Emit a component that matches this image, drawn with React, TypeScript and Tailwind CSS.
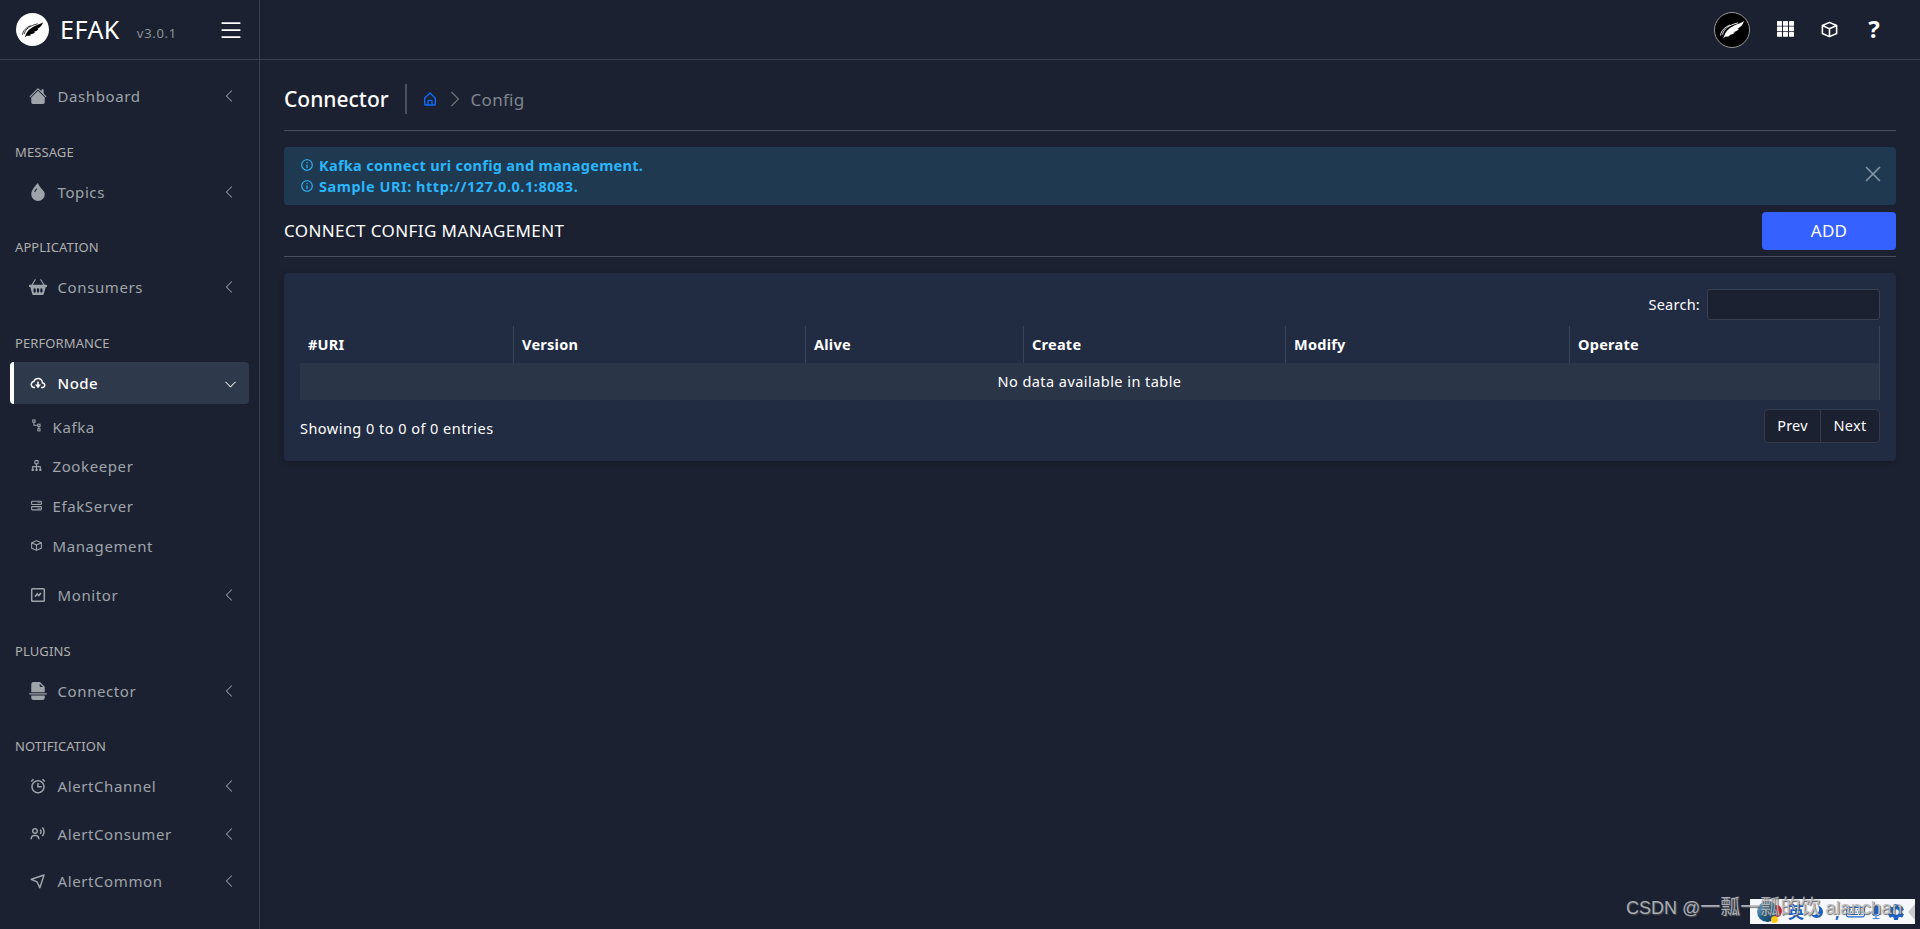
import type { ReactNode } from "react"
import type { IconType } from "react-icons"
import {
  BiAlarm,
  BiCloudDownload,
  BiCube,
  BiHomeAlt,
  BiInfoCircle,
  BiNavigation,
  BiServer,
  BiSitemap,
  BiUserVoice,
} from "react-icons/bi"
import {
  BsBasket2Fill,
  BsChevronDown,
  BsChevronLeft,
  BsChevronRight,
  BsDropletFill,
  BsFileEarmarkBreakFill,
  BsHouseFill,
  BsKeyboard,
  BsList,
  BsMicFill,
  BsMoonFill,
} from "react-icons/bs"
import { IoSettingsSharp } from "react-icons/io5"

type IconProps = { className?: string }

function FeatherMark({ className }: IconProps) {
  return (
    <svg viewBox="0 0 24 18" className={className} fill="currentColor">
      <path d="M24 0C22.500 1.600 17 3 12.500 5.500 9 7.600 6.500 9.800 5.200 12.500L3 17.500l2.500-2c1.500.3 3.500.1 5-.9l-1.700-.4c2.200-.2 4.700-1.100 6.200-2.600l-2-.3c2.500-.5 4.800-1.700 6-3.500l-1.700-.1C20 6.500 23 4 24 0z" />
      <path d="M18 1.900C9 4 3.500 8 2.600 13.500" fill="none" stroke="currentColor" strokeWidth=".9" />
      <path d="M10 4C5 6 1.200 9.500.5 14.500" fill="none" stroke="currentColor" strokeWidth=".9" />
    </svg>
  )
}

// rising line in a box
function MonitorIcon({ className }: IconProps) {
  return (
    <svg viewBox="0 0 18 18" className={className} fill="none" stroke="currentColor" strokeWidth="1.500">
      <rect x="2.700" y="2.700" width="12.600" height="12.600" rx=".8" />
      <path d="M6 10.600L8.300 8l1.600 1.600L12 7" strokeWidth="1.600" />
    </svg>
  )
}

// three boxes going down like steps
function StepsIcon({ className }: IconProps) {
  return (
    <svg viewBox="0 0 12 14" className={className} fill="none" stroke="currentColor" strokeWidth="1.100">
      <rect x="2" y="1" width="2.400" height="2.400" />
      <rect x="7.400" y="5.600" width="2.400" height="2.400" />
      <rect x="7.400" y="10.400" width="2.400" height="2.400" />
      <path d="M3.200 3.400v3.400h4.200M8.600 8v2.400" />
    </svg>
  )
}

function GridIcon({ className }: IconProps) {
  return (
    <svg viewBox="0 0 17 16" className={className} fill="currentColor">
      {[0, 6, 12].map((x) =>
        [0, 5.5, 11].map((y) => <rect key={x + "-" + y} x={x} y={y} width="5" height="4.700" rx=".5" />)
      )}
    </svg>
  )
}

function NavLabel({ children }: { children: ReactNode }) {
  return (
    <div className="flex h-12 items-center px-[15px] pt-[21.5px] text-[13px] leading-none tracking-[0.1px] text-[#b0afb0]">
      {children}
    </div>
  )
}

function NavItem({
  icon: Icon,
  label,
  active,
}: {
  icon: IconType | ((props: IconProps) => ReactNode)
  label: string
  active?: boolean
}) {
  return (
    <div
      className={
        active
          ? "mx-2.5 mt-[5px] flex h-[42.5px] items-center rounded border-l-4 border-white bg-[#2f394c] pl-[15px] pr-3 text-white"
          : "mx-2.5 mt-[5px] flex h-[42.5px] items-center rounded border-l-4 border-transparent pl-[15px] pr-[13.5px] text-[#9fa4ab]"
      }
    >
      <Icon className="h-[18px] w-[18px] shrink-0" />
      <span className={active ? "ml-[10.5px] flex-1 text-[15px] font-medium tracking-[0.5px]" : "ml-[10.5px] flex-1 text-[15px] tracking-[0.6px]"}>
        {label}
      </span>
      {active ? <BsChevronDown className="mt-1 h-[13px] w-[13px]" /> : <BsChevronLeft className="h-[14px] w-[14px]" />}
    </div>
  )
}

function SubItem({ icon: Icon, label }: { icon: IconType | ((props: IconProps) => ReactNode); label: string }) {
  return (
    <div className="flex h-[39.75px] items-center pl-[29.5px] text-[#9fa4ab]">
      <Icon className="mb-0.5 h-[13px] w-[13px]" />
      <span className="ml-2.5 text-[15px] tracking-[0.6px]">{label}</span>
    </div>
  )
}

function Sidebar() {
  return (
    <aside className="w-[260px] shrink-0 border-r border-[#3a4151]">
      <div className="flex h-[60px] items-center border-b border-[#3a4151] pl-4 pr-[14px]">
        <div className="flex h-[33px] w-[33px] items-center justify-center rounded-full bg-white text-black">
          <FeatherMark className="h-[16px] w-[21px]" />
        </div>
        <span className="ml-[11px] pb-px text-[25px] leading-none tracking-[0.5px] text-white">EFAK</span>
        <span className="ml-[17px] mt-2 text-[13px] leading-none tracking-[0.7px] text-[#8d9299]">v3.0.1</span>
        <BsList className="ml-auto h-7 w-7 text-white" />
      </div>
      <nav className="pt-[10px]">
        <NavItem icon={BsHouseFill} label="Dashboard" />
        <NavLabel>MESSAGE</NavLabel>
        <NavItem icon={BsDropletFill} label="Topics" />
        <NavLabel>APPLICATION</NavLabel>
        <NavItem icon={BsBasket2Fill} label="Consumers" />
        <NavLabel>PERFORMANCE</NavLabel>
        <NavItem icon={BiCloudDownload} label="Node" active />
        <div className="pb-[3px] pt-[3px]">
          <SubItem icon={StepsIcon} label="Kafka" />
          <SubItem icon={BiSitemap} label="Zookeeper" />
          <SubItem icon={BiServer} label="EfakServer" />
          <SubItem icon={BiCube} label="Management" />
        </div>
        <NavItem icon={MonitorIcon} label="Monitor" />
        <NavLabel>PLUGINS</NavLabel>
        <NavItem icon={BsFileEarmarkBreakFill} label="Connector" />
        <NavLabel>NOTIFICATION</NavLabel>
        <NavItem icon={BiAlarm} label="AlertChannel" />
        <NavItem icon={BiUserVoice} label="AlertConsumer" />
        <NavItem icon={BiNavigation} label="AlertCommon" />
      </nav>
    </aside>
  )
}

function TopBar() {
  return (
    <header className="flex h-[60px] items-center justify-end border-b border-[#3a4151] pr-[38px] text-white">
      <div className="flex h-9 w-9 items-center justify-center rounded-full border border-[#9a9a9a] bg-black">
        <FeatherMark className="h-[18px] w-6" />
      </div>
      <GridIcon className="mb-0.5 ml-[27px] h-4 w-[17px]" />
      <BiCube className="mb-px ml-[26px] h-[19px] w-[19px]" />
      <span className="ml-[27px] w-4 pb-0.5 text-center text-[24px] font-bold leading-none">?</span>
    </header>
  )
}

const columns = ["#URI", "Version", "Alive", "Create", "Modify", "Operate"]

function ConfigTable() {
  return (
    <div className="mt-4 h-[188px] rounded bg-[#212b42] p-4 text-[14.5px] leading-[21px] tracking-[0.25px] text-white shadow-[0_2px_6px_rgba(0,0,0,0.2)]">
      <div className="flex items-center justify-end gap-[7px]">
        <label htmlFor="search">Search:</label>
        <input id="search" className="h-[31px] w-[173px] rounded-[3px] border border-[#3a4250] bg-[#1b2130]" />
      </div>
      <table className="mt-1.5 w-full table-fixed border-separate border-spacing-0">
        <colgroup>
          <col className="w-[214px]" />
          <col className="w-[292px]" />
          <col className="w-[218px]" />
          <col className="w-[262px]" />
          <col className="w-[284px]" />
          <col />
        </colgroup>
        <thead>
          <tr className="h-[37px]">
            {columns.map((name) => (
              <th key={name} className="border-r border-[#3a4354] px-2 py-0 text-left font-bold">
                {name}
              </th>
            ))}
          </tr>
        </thead>
        <tbody>
          <tr className="h-[37px] bg-[#2a3548]">
            <td colSpan={6} className="border-r border-[#3a4354] p-0 text-center tracking-[0.45px]">
              No data available in table
            </td>
          </tr>
        </tbody>
      </table>
      <div className="mt-[9px] flex justify-between">
        <span className="mt-[9px] tracking-[0.47px]">Showing 0 to 0 of 0 entries</span>
        <div className="flex h-[34px] w-[116px] rounded border border-[#343b48] bg-[#1b2130]">
          <button className="w-14 border-r border-[#343b48] pb-0.5">Prev</button>
          <button className="flex-1 pb-0.5">Next</button>
        </div>
      </div>
    </div>
  )
}

function ImeBar() {
  return (
    <div className="absolute bottom-[5px] right-[5px] flex h-[25px] w-[165px] items-center bg-[#f7f8fb] pl-[7px] text-[#1c62c8]">
      <span className="relative h-[21px] w-[21px] rounded-full bg-gradient-to-br from-[#8fbdd6] via-[#1f5f88] to-[#123a58]">
        <span className="absolute -right-1 top-1 h-3 w-1.5 rounded-r-full bg-[#d21f2b]" />
        <span className="absolute -bottom-px right-0 h-[7px] w-[7px] rounded-full bg-[#ffc61a]" />
      </span>
      <span className="ml-[10px] text-[16px] font-bold leading-none">英</span>
      <BsMoonFill className="ml-[7px] h-3 w-3 -scale-x-100" />
      <span className="ml-3 text-[16px] font-bold leading-none">,</span>
      <BsKeyboard className="ml-1.5 h-[19px] w-[19px]" />
      <BsMicFill className="ml-1 h-4 w-3.5" />
      <IoSettingsSharp className="ml-1 h-[18px] w-[18px]" />
      <span className="ml-auto h-0 w-0 border-y-[8px] border-r-[7px] border-y-transparent border-r-[#c8cace]" />
    </div>
  )
}

export default function App() {
  return (
    <div className="relative flex h-[929px] w-[1920px] overflow-hidden bg-[#1b2130] font-['Noto_Sans','Noto_Sans_CJK_SC',sans-serif]">
      <Sidebar />
      <div className="flex-1">
        <TopBar />
        <main className="px-6">
          <div className="flex h-[71px] items-center border-b border-[#4a5060] pt-2">
            <h1 className="w-[104px] whitespace-nowrap text-[21px] font-medium leading-none text-white">
              Connector
            </h1>
            <div className="ml-[17px] h-[30px] w-[1.5px] bg-[#4a5060]" />
            <BiHomeAlt className="ml-[15px] h-4 w-4 text-[#0d6efd]" />
            <BsChevronRight className="ml-2 h-[18px] w-[18px] text-[#6c757d]" />
            <span className="ml-[7px] text-[17px] leading-none tracking-[0.3px] text-[#7f868e]">Config</span>
          </div>

          <div className="mt-4 flex h-[58px] items-center justify-between rounded bg-[#1e3950] pl-4 pr-[15px] text-[#2bb5fb]">
            <div className="text-[14.5px] font-bold leading-[21px]">
              <p className="flex items-center gap-[5px] tracking-[0.3px]">
                <BiInfoCircle className="mb-0.5 h-3.5 w-3.5" />
                Kafka connect uri config and management.
              </p>
              <p className="flex items-center gap-[5px] tracking-[0.53px]">
                <BiInfoCircle className="mb-0.5 h-3.5 w-3.5" />
                Sample URI: http://127.0.0.1:8083.
              </p>
            </div>
            <svg viewBox="0 0 16 16" className="mb-1 h-4 w-4 text-[#8796a3]" stroke="currentColor" strokeWidth="1.600">
              <path d="M1 1l14 14M15 1L1 15" />
            </svg>
          </div>

          <div className="mt-[7px] flex h-[45px] items-start justify-between border-b border-[#4a5060]">
            <h2 className="mt-[10px] text-[17px] leading-none tracking-[0.4px] text-white">CONNECT CONFIG MANAGEMENT</h2>
            <button className="h-[38px] w-[134px] rounded bg-[#3461ff] text-[17px] tracking-[0.2px] text-white">ADD</button>
          </div>

          <ConfigTable />
        </main>
      </div>

      <ImeBar />
      <div className="absolute bottom-[6px] left-[1626px] whitespace-nowrap font-['Liberation_Sans','Noto_Sans_CJK_SC',sans-serif] text-[18px] leading-[29px] text-[#b9bcc2] opacity-90 [text-shadow:1px_1px_1px_#555]">
        CSDN @<span className="text-[20px]">一瓢一瓢的饮</span> <span className="text-[19px]">alanchan</span>
      </div>
    </div>
  )
}
